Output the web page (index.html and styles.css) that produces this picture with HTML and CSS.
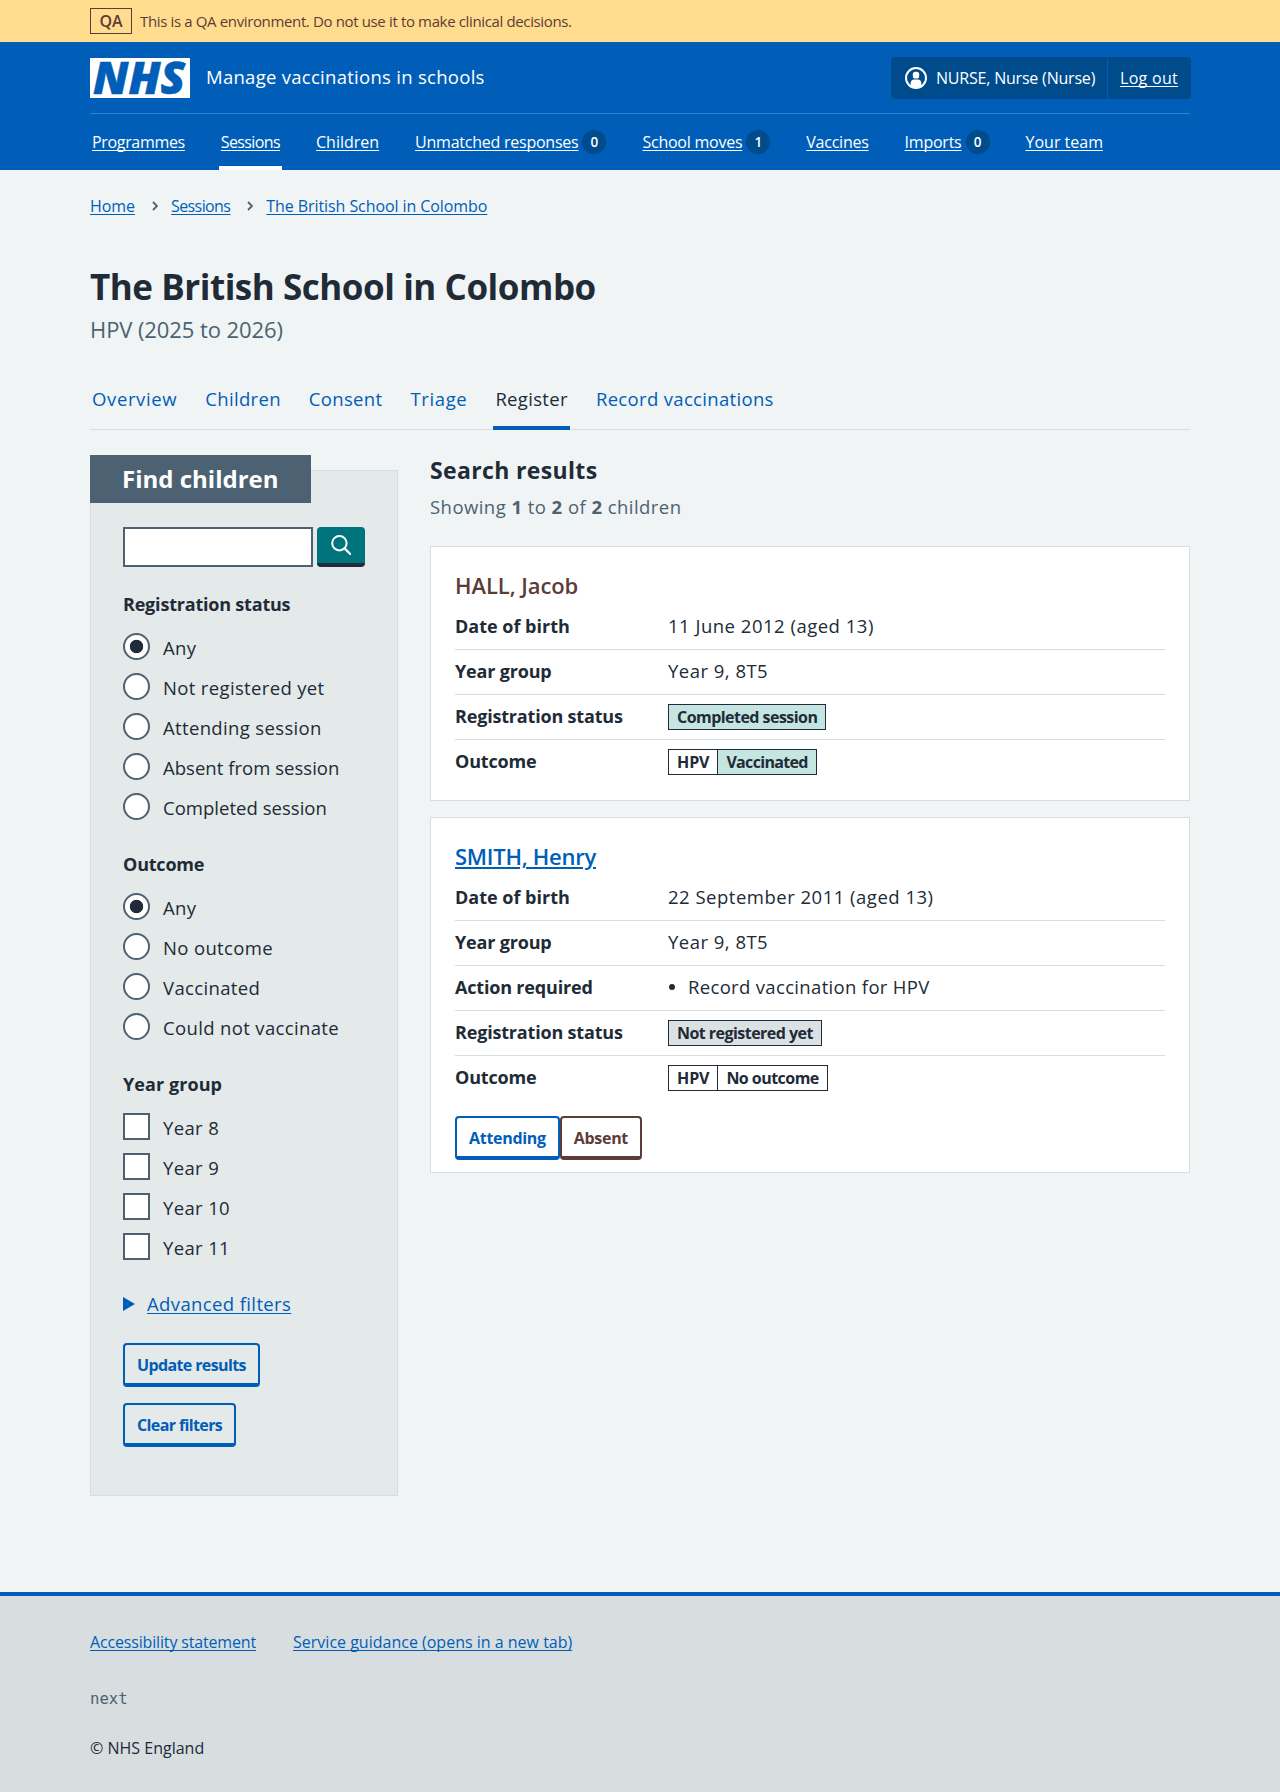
FILE: index.html
```html
<!DOCTYPE html>
<html lang="en">
<head>
<meta charset="utf-8">
<title>The British School in Colombo – Manage vaccinations in schools</title>
<link rel="stylesheet" href="styles.css">
</head>
<body>
<div class="environment">
  <div class="container environment-inner">
    <strong class="environment-tag">QA</strong>
    <span class="environment-text">This is a QA environment. Do not use it to make clinical decisions.</span>
  </div>
</div>

<header class="header">
  <div class="container">
    <div class="header-top">
      <svg class="logo" viewBox="0 0 100 40" width="100" height="40" role="img" aria-label="NHS">
        <rect width="100" height="40" fill="#fff"/>
        <text class="logo-text" x="3" y="36.3" textLength="92" lengthAdjust="spacingAndGlyphs">NHS</text>
      </svg>
      <span class="service-name">Manage vaccinations in schools</span>
      <div class="account">
        <span class="account-user">
          <svg class="account-icon" viewBox="0 0 22 22" width="22" height="22" aria-hidden="true">
            <circle cx="11" cy="11" r="10" fill="none" stroke="#fff" stroke-width="2"/>
            <rect x="7.8" y="4.8" width="6.4" height="6.8" rx="2.6" fill="#fff"/>
            <path d="M5.6 19.4v-2.9c0-2.5 1.6-3.9 3.6-3.9h3.6c2 0 3.6 1.4 3.6 3.9v2.9a10 10 0 0 1-10.8 0z" fill="#fff"/>
          </svg>
          <span class="account-name">NURSE, Nurse (Nurse)</span>
        </span>
        <a class="account-logout" href="#">Log out</a>
      </div>
    </div>
    <nav class="main-nav">
      <div class="nav-item"><a href="#">Programmes</a></div>
      <div class="nav-item nav-item-current"><a href="#">Sessions</a></div>
      <div class="nav-item"><a href="#">Children</a></div>
      <div class="nav-item"><a href="#">Unmatched responses</a><span class="count">0</span></div>
      <div class="nav-item"><a href="#">School moves</a><span class="count">1</span></div>
      <div class="nav-item"><a href="#">Vaccines</a></div>
      <div class="nav-item"><a href="#">Imports</a><span class="count">0</span></div>
      <div class="nav-item"><a href="#">Your team</a></div>
    </nav>
  </div>
</header>

<main class="container">
  <nav class="breadcrumb">
    <a class="crumb-home" href="#">Home</a>
    <svg class="chevron" viewBox="0 0 6 10" width="6" height="10"><path d="M1 1l4 4-4 4" fill="none" stroke="#4c6272" stroke-width="1.8"/></svg>
    <a class="crumb-sessions" href="#">Sessions</a>
    <svg class="chevron" viewBox="0 0 6 10" width="6" height="10"><path d="M1 1l4 4-4 4" fill="none" stroke="#4c6272" stroke-width="1.8"/></svg>
    <a href="#">The British School in Colombo</a>
  </nav>
  <h1 class="title">The British School in Colombo</h1>
  <p class="caption">HPV (2025 to 2026)</p>

  <nav class="tabs">
    <a class="tab tab-wide" href="#">Overview</a>
    <a class="tab" href="#">Children</a>
    <a class="tab" href="#">Consent</a>
    <a class="tab tab-wide" href="#">Triage</a>
    <a class="tab tab-current" href="#">Register</a>
    <a class="tab" href="#">Record vaccinations</a>
  </nav>

  <div class="columns">
    <aside class="filters">
      <h2 class="filters-heading">Find children</h2>
      <div class="search">
        <input class="search-input" type="text" aria-label="Search">
        <button class="search-button" aria-label="Search">
          <svg viewBox="0 0 20 20" width="20" height="20"><circle cx="8.4" cy="8.2" r="7.2" fill="none" stroke="#fff" stroke-width="2"/><path d="M13.6 13.4l5.6 5.6" stroke="#fff" stroke-width="2.2" stroke-linecap="round"/></svg>
        </button>
      </div>

      <h3 class="legend">Registration status</h3>
      <label class="option"><span class="radio radio-checked"></span><span class="option-label">Any</span></label>
      <label class="option"><span class="radio"></span><span class="option-label">Not registered yet</span></label>
      <label class="option"><span class="radio"></span><span class="option-label">Attending session</span></label>
      <label class="option"><span class="radio"></span><span class="option-label option-tight">Absent from session</span></label>
      <label class="option"><span class="radio"></span><span class="option-label option-tight">Completed session</span></label>

      <h3 class="legend">Outcome</h3>
      <label class="option"><span class="radio radio-checked"></span><span class="option-label">Any</span></label>
      <label class="option"><span class="radio"></span><span class="option-label">No outcome</span></label>
      <label class="option"><span class="radio"></span><span class="option-label">Vaccinated</span></label>
      <label class="option"><span class="radio"></span><span class="option-label">Could not vaccinate</span></label>

      <h3 class="legend legend-year">Year group</h3>
      <label class="option"><span class="checkbox"></span><span class="option-label">Year 8</span></label>
      <label class="option"><span class="checkbox"></span><span class="option-label">Year 9</span></label>
      <label class="option"><span class="checkbox"></span><span class="option-label">Year 10</span></label>
      <label class="option"><span class="checkbox"></span><span class="option-label">Year 11</span></label>

      <div class="advanced">
        <svg class="advanced-arrow" viewBox="0 0 12 14" width="12" height="14"><path d="M0 0l12 7-12 7z" fill="#005eb8"/></svg>
        <a href="#">Advanced filters</a>
      </div>
      <div class="filter-buttons">
        <button class="button">Update results</button>
        <button class="button">Clear filters</button>
      </div>
    </aside>

    <section class="results">
      <h2 class="results-heading">Search results</h2>
      <p class="results-count">Showing <b>1</b> to <b>2</b> of <b>2</b> children</p>

      <article class="card">
        <h3 class="card-name">HALL, Jacob</h3>
        <dl class="summary">
          <div class="row"><dt>Date of birth</dt><dd class="date">11 June 2012 (aged 13)</dd></div>
          <div class="row"><dt>Year group</dt><dd class="year">Year 9, 8T5</dd></div>
          <div class="row"><dt>Registration status</dt><dd><span class="tag tag-teal">Completed session</span></dd></div>
          <div class="row"><dt>Outcome</dt><dd><span class="tag tag-programme">HPV</span><span class="tag tag-teal tag-joined tag-vaccinated">Vaccinated</span></dd></div>
        </dl>
      </article>

      <article class="card">
        <h3 class="card-name"><a href="#">SMITH, Henry</a></h3>
        <dl class="summary">
          <div class="row"><dt>Date of birth</dt><dd class="date">22 September 2011 (aged 13)</dd></div>
          <div class="row"><dt>Year group</dt><dd class="year">Year 9, 8T5</dd></div>
          <div class="row"><dt>Action required</dt><dd><ul class="actions"><li>Record vaccination for HPV</li></ul></dd></div>
          <div class="row"><dt>Registration status</dt><dd><span class="tag tag-grey">Not registered yet</span></dd></div>
          <div class="row"><dt>Outcome</dt><dd><span class="tag tag-programme">HPV</span><span class="tag tag-joined">No outcome</span></dd></div>
        </dl>
        <div class="card-buttons">
          <button class="button button-attend">Attending</button>
          <button class="button button-absent">Absent</button>
        </div>
      </article>
    </section>
  </div>
</main>

<footer class="footer">
  <div class="container">
    <div class="footer-links">
      <a class="footer-tight" href="#">Accessibility statement</a>
      <a href="#">Service guidance (opens in a new tab)</a>
    </div>
    <p class="release">next</p>
    <p class="copyright">© NHS England</p>
  </div>
</footer>
</body>
</html>
```
FILE: styles.css
```css
* { box-sizing: border-box; }
body {
  margin: 0;
  min-height: 1792px;
  display: flex;
  flex-direction: column;
  background: #f0f4f5;
  color: #212b38;
  font: 16px/24px "Open Sans", "Noto Sans", sans-serif;
}
h1, h2, h3, p, dl, dd, ul { margin: 0; padding: 0; }
a {
  color: #005eb8;
  text-decoration: underline;
  text-decoration-thickness: 1px;
  text-underline-offset: 1.5px;
  text-decoration-skip-ink: none;
}
.container { width: 1100px; margin: 0 auto; }

/* Environment banner */
.environment { background: #ffdc8e; color: #5c3c38; }
.environment-inner { display: flex; align-items: center; gap: 8px; height: 42px; }
.environment-tag {
  width: 42px;
  height: 26px;
  border: 1px solid currentColor;
  font-size: 16px;
  font-weight: 600;
  line-height: 24px;
  text-align: center;
}
.environment-text { font-size: 15px; letter-spacing: -0.36px; }

/* Header */
.header { background: #005eb8; color: #fff; }
.header a { color: #fff; }
.header-top {
  display: flex;
  align-items: center;
  height: 72px;
  border-bottom: 1px solid #337eca;
}
.logo { display: block; overflow: visible; }
.logo-text {
  font: italic 800 45px "Open Sans", sans-serif;
  fill: #005eb8;
  stroke: #005eb8;
  stroke-width: 0.6px;
}
.service-name { margin: 0 auto 2px 16px; font-size: 18.5px; letter-spacing: 0.28px; }
.account {
  display: flex;
  height: 42px;
  margin: 1px -1px 0 0;
  border-radius: 4px;
  background: #004b8b;
}
.account-user {
  display: flex;
  align-items: center;
  width: 217px;
  margin: 1px 0;
  padding-left: 14px;
  border-right: 1px solid #005eb8;
}
.account-icon { margin-right: 9px; }
.account-name { letter-spacing: -0.2px; white-space: nowrap; }
.account-logout { width: 83px; padding-left: 12px; line-height: 42px; letter-spacing: 0.3px; }
.main-nav { display: flex; gap: 32px; height: 56px; }
.nav-item { display: flex; align-items: center; padding: 0 2px; letter-spacing: -0.24px; }
.nav-item:first-child { letter-spacing: -0.33px; }
.nav-item-current { box-shadow: inset 0 -4px #fff; letter-spacing: -0.62px; }
.nav-item:nth-child(3), .nav-item:nth-child(8) { letter-spacing: 0; }
.count {
  width: 24px;
  height: 24px;
  margin-left: 4px;
  border-radius: 50%;
  background: #004b8b;
  font-size: 13.5px;
  line-height: 25px;
  font-weight: 600;
  letter-spacing: 0;
  text-align: center;
}

/* Page heading */
.breadcrumb { display: flex; align-items: center; height: 24px; margin-top: 24px; letter-spacing: -0.08px; }
.chevron { margin: 0 13px 0 17px; }
.crumb-home { letter-spacing: -0.05px; }
.crumb-sessions { letter-spacing: -0.6px; }
.title { margin-top: 47px; font-size: 35px; line-height: 44px; font-weight: 700; letter-spacing: -0.46px; }
.caption { margin-top: 4px; color: #4c6272; font-size: 22px; line-height: 32px; letter-spacing: -0.08px; }

/* Secondary navigation */
.tabs {
  display: flex;
  gap: 24px;
  height: 62px;
  margin-top: 23px;
  box-shadow: inset 0 -1px #d8dde0;
  font-size: 18.5px;
  line-height: 62px;
  letter-spacing: 0.33px;
}
.tab { padding: 0 2px; text-decoration: none; }
.tab-wide { letter-spacing: 0.63px; }
.tab-current { color: #212b38; box-shadow: inset 0 -4px #005eb8; }

.columns { display: grid; grid-template-columns: 308px 760px; gap: 32px; align-items: start; }

/* Filters */
.filters {
  margin-top: 40px;
  padding: 0 32px 48px;
  border: 1px solid #d8dde0;
  background: #e4e9e9;
}
.filters-heading {
  width: 221px;
  height: 48px;
  margin: -16px 0 24px -33px;
  padding-left: 32px;
  background: #4c6272;
  color: #fff;
  font-size: 24px;
  font-weight: 700;
  line-height: 47px;
}
.search { display: flex; gap: 4px; height: 40px; }
.search-input { width: 190px; height: 40px; border: 2px solid #4c6272; border-radius: 0; background: #fff; }
.search-button {
  display: flex;
  align-items: center;
  justify-content: center;
  width: 48px;
  padding: 0;
  border: 0;
  border-bottom: 4px solid #212b3c;
  border-radius: 4px;
  background: #00747c;
}
.legend { margin: 23px 0 9px; font-size: 18px; line-height: 28px; font-weight: 700; letter-spacing: -0.2px; }
.legend-year { letter-spacing: 0.07px; }
.option { display: flex; align-items: center; height: 40px; }
.radio, .checkbox {
  flex: none;
  width: 27px;
  height: 27px;
  margin-bottom: 1px;
  border: 2px solid #4c6272;
  background: #fff;
}
.radio { border-radius: 50%; }
.radio-checked { background: radial-gradient(circle, #212b3c 6.3px, #fff 7.1px); }
.option-label { padding: 2px 0 0 13px; font-size: 18.5px; letter-spacing: 0.35px; }
.option-tight { letter-spacing: 0.03px; }
.advanced { display: flex; align-items: center; gap: 12px; margin-top: 23px; font-size: 18.5px; line-height: 28px; letter-spacing: 0.38px; }
.filter-buttons { display: flex; flex-direction: column; align-items: flex-start; gap: 16px; margin-top: 25px; }
.button {
  height: 44px;
  padding: 2px 12px 0;
  border: 2px solid #005eb8;
  border-bottom-width: 4px;
  border-radius: 4px;
  background: transparent;
  color: #005eb8;
  font: 700 16px/24px "Open Sans", "Noto Sans", sans-serif;
  letter-spacing: -0.62px;
}

/* Results */
.results-heading { margin-top: 24px; font-size: 23px; line-height: 32px; font-weight: 700; letter-spacing: 0.35px; }
.results-count { margin-top: 7px; color: #4c6272; font-size: 18.5px; line-height: 28px; letter-spacing: 0.45px; }
.card {
  margin-top: 16px;
  padding: 22px 24px 16px;
  border: 1px solid #d8dde0;
  background: #fff;
}
.results-count + .card { margin-top: 25px; }
.card-name { color: #5c3c38; font-size: 22px; line-height: 32px; font-weight: 600; letter-spacing: -0.08px; }
.card-name a { letter-spacing: -0.27px; text-decoration-thickness: 2px; text-decoration-skip-ink: auto; text-underline-offset: 2px; }
.summary { margin-top: 4px; font-size: 18px; line-height: 28px; }
.row {
  display: grid;
  grid-template-columns: 213px 1fr;
  height: 45px;
  padding-top: 7px;
  border-bottom: 1px solid #d8dde0;
}
.row:last-child { height: 44px; border-bottom: 0; }
.row dt { font-weight: 700; letter-spacing: -0.18px; }
.row:first-child dt { letter-spacing: 0; }
.row dd { display: flex; align-items: flex-start; font-size: 18.5px; letter-spacing: 0.33px; }
.row .date { letter-spacing: 0.5px; }
.row .year { letter-spacing: 0.48px; }
.tag {
  height: 26px;
  margin-top: 2px;
  padding: 0 8px;
  border: 1px solid #212b3c;
  font-size: 16px;
  line-height: 25px;
  font-weight: 700;
  letter-spacing: -0.54px;
}
.tag-programme { letter-spacing: -0.1px; }
.tag-vaccinated { letter-spacing: -0.68px; }
.tag-joined { border-left: 0; }
.tag-teal { background: #c5e5e1; }
.tag-grey { background: #dbe0e3; }
.actions { list-style: none; }
.actions li { display: flex; align-items: center; gap: 13px; }
.actions li::before { content: ""; width: 6px; height: 6px; margin-left: 1px; border-radius: 50%; background: #212b3c; }
.card-buttons { display: flex; margin: 16px 0 -4px; }
.button-attend { letter-spacing: -0.3px; }
.button-absent { border-color: #5c3c38; color: #5c3c38; letter-spacing: -0.3px; }

/* Footer */
.footer { flex: 1; margin-top: 96px; border-top: 4px solid #005eb8; background: #d8dde0; }
.footer-links { display: flex; gap: 37px; margin-top: 34px; }
.footer-tight { letter-spacing: -0.16px; }
.release { margin-top: 33px; color: #4c6272; font-family: "DejaVu Sans Mono", monospace; font-size: 15.6px; }
.copyright { margin-top: 25px; }
```
